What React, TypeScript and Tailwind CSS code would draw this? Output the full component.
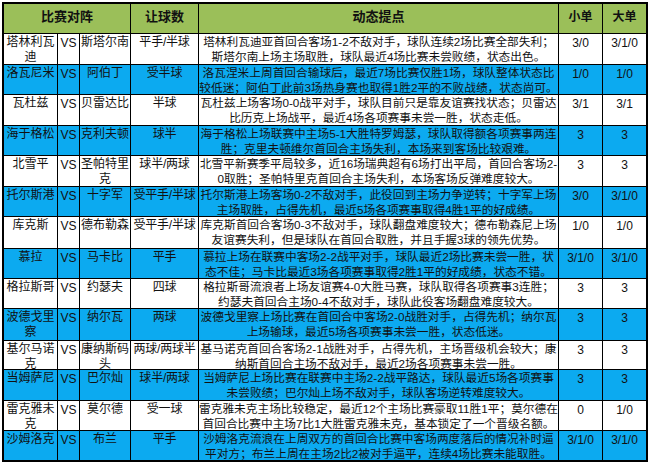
import React from "react";

type Row = {
  a: string;
  b: string;
  h: string;
  lines: [string, string];
  s: string;
  l: string;
};

const rows: Row[] = [
  { a: "塔林利瓦迪", b: "斯塔尔南", h: "平手/半球", lines: ["塔林利瓦迪亚首回合客场1-2不敌对手，球队连续2场比赛全部失利；", "斯塔尔南上场主场取胜，球队最近4场比赛未尝败绩，状态出色。"], s: "3/0", l: "3/1/0" },
  { a: "洛瓦尼米", b: "阿伯丁", h: "受半球", lines: ["洛瓦涅米上周首回合输球后，最近7场比赛仅胜1场，球队整体状态比", "较低迷；阿伯丁此前3场热身赛也取得1胜2平的不败战绩，状态尚可。"], s: "1/0", l: "1/0" },
  { a: "瓦杜兹", b: "贝雷达比", h: "半球", lines: ["瓦杜兹上场客场0-0战平对手，球队目前只是靠友谊赛找状态；贝雷达", "比历克上场战平，最近4场各项赛事未尝一胜，状态走低。"], s: "3/1", l: "3/1" },
  { a: "海于格松", b: "克利夫顿", h: "球半", lines: ["海于格松上场联赛中主场5-1大胜特罗姆瑟，球队取得额各项赛事两连", "胜；克里夫顿维尔首回合主场失利，本场来到客场比较艰难。"], s: "3", l: "3" },
  { a: "北雪平", b: "圣帕特里克", h: "球半/两球", lines: ["北雪平新赛季平局较多，近16场瑞典超有6场打出平局，首回合客场2-", "0取胜；圣帕特里克首回合主场失利，本场客场反弹难度较大。"], s: "3", l: "3" },
  { a: "托尔斯港", b: "十字军", h: "受平手/半球", lines: ["托尔斯港上场客场0-2不敌对手，此役回到主场力争逆转；十字军上场", "主场取胜，占得先机，最近5场各项赛事取得4胜1平的好成绩。"], s: "3/0", l: "3/1/0" },
  { a: "库克斯", b: "德布勒森", h: "受平手/半球", lines: ["库克斯首回合客场0-3不敌对手，球队翻盘难度较大；德布勒森尼上场", "友谊赛失利，但是球队在首回合取胜，并且手握3球的领先优势。"], s: "1/0", l: "1/0" },
  { a: "慕拉", b: "马卡比", h: "平手", lines: ["慕拉上场在联赛中客场2-2战平对手，球队最近2场比赛未尝一胜，状", "态不佳；马卡比最近3场各项赛事取得2胜1平的好成绩，状态不错。"], s: "3/1/0", l: "3/1/0" },
  { a: "格拉斯哥", b: "约瑟夫", h: "四球", lines: ["格拉斯哥流浪者上场友谊赛4-0大胜马赛，球队取得各项赛事3连胜；", "约瑟夫首回合主场0-4不敌对手，球队此役客场翻盘难度较大。"], s: "3", l: "3" },
  { a: "波德戈里察", b: "纳尔瓦", h: "两球", lines: ["波德戈里察上场比赛在首回合中客场2-0战胜对手，占得先机；纳尔瓦", "上场输球，最近5场各项赛事未尝一胜，状态低迷。"], s: "3", l: "3" },
  { a: "基尔马诺克", b: "康纳斯码头", h: "两球/两球半", lines: ["基马诺克首回合客场2-1战胜对手，占得先机，主场晋级机会较大；康", "纳斯首回合主场不敌对手，最近2场各项赛事未尝一胜。"], s: "3", l: "3" },
  { a: "当姆萨尼", b: "巴尔灿", h: "球半/两球", lines: ["当姆萨尼上场比赛在联赛中主场2-2战平路达，球队最近5场各项赛事", "未尝败绩；巴尔灿上场不敌对手，球队客场逆转难度较大。"], s: "3", l: "3" },
  { a: "雷克雅未克", b: "莫尔德", h: "受一球", lines: ["雷克雅未克主场比较稳定，最近12个主场比赛豪取11胜1平；莫尔德在", "首回合比赛中主场7比1大胜雷克雅未克，基本锁定了一个晋级名额。"], s: "0", l: "1/0" },
  { a: "沙姆洛克", b: "布兰", h: "平手", lines: ["沙姆洛克流浪在上周双方的首回合比赛中客场两度落后的情况补时逼", "平对方；布兰上周在主场2比2被对手逼平，连续4场比赛未能取胜。"], s: "3/1/0", l: "3/1/0" },
];

export default function App() {
  return (
    <div
      className="w-[650px] h-[462px] bg-white pt-[2px] pl-[2px] overflow-hidden"
      style={{ fontFamily: '"Liberation Sans", "Noto Sans CJK SC", sans-serif' }}
    >
      <div className="inline-grid border-2 border-black bg-black gap-px grid-cols-[53px_21px_50px_67px_359px_43px_43px] grid-rows-[29px_30px_29px_30px_29px_30px_29px_31px_29px_29px_31px_28px_30px_29px_29px] text-[12px] leading-[14.5px] text-[#111]">
        <div className="col-span-3 bg-[#9bbf59] font-bold text-[13px] flex items-center justify-center pb-[2px]">比赛对阵</div>
        <div className="bg-[#9bbf59] font-bold text-[13px] flex items-center justify-center pb-[2px]">让球数</div>
        <div className="bg-[#9bbf59] font-bold text-[13px] flex items-center justify-center pb-[2px]">动态提点</div>
        <div className="bg-[#9bbf59] font-bold text-[12px] flex items-center justify-center pb-[2px]">小单</div>
        <div className="bg-[#9bbf59] font-bold text-[12px] flex items-center justify-center pb-[2px]">大单</div>
        {rows.map((r, i) => {
          const bg = i % 2 === 1 ? "bg-[#0caaf0]" : "bg-white";
          return (
            <React.Fragment key={i}>
              <div className={`${bg} text-center pt-px px-px break-all`}>{r.a}</div>
              <div className={`${bg} text-center pt-[2px] text-[12px]`}>VS</div>
              <div className={`${bg} text-center pt-px px-px break-all`}>{r.b}</div>
              <div className={`${bg} text-center pt-px whitespace-nowrap tracking-[-0.2px]`}>{r.h}</div>
              <div className={`${bg} text-center pt-px whitespace-nowrap overflow-hidden text-[11.7px]`}>
                {r.lines[0]}
                <br />
                {r.lines[1]}
              </div>
              <div className={`${bg} text-center pt-[2px]`}>{r.s}</div>
              <div className={`${bg} text-center pt-[2px]`}>{r.l}</div>
            </React.Fragment>
          );
        })}
      </div>
    </div>
  );
}
